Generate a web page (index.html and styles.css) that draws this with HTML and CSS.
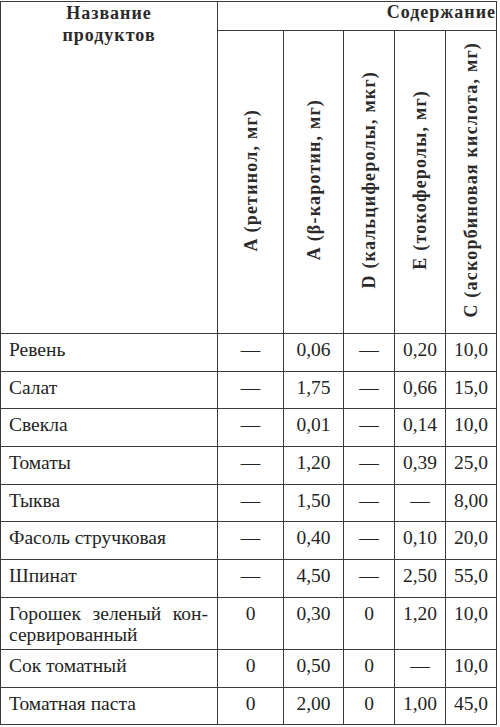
FILE: index.html
```html
<!DOCTYPE html>
<html lang="ru">
<head>
<meta charset="utf-8">
<title>Витамины</title>
<link rel="stylesheet" href="styles.css">
</head>
<body>
<table class="tbl">
  <colgroup>
    <col class="c-name">
    <col class="c1">
    <col class="c2">
    <col class="c3">
    <col class="c4">
    <col class="c5">
  </colgroup>
  <thead>
    <tr class="h1">
      <th class="hname" rowspan="2">Название<br>продуктов</th>
      <th class="hcont" colspan="5">Содержание</th>
    </tr>
    <tr class="h2">
      <th class="hv"><span class="vt">A (ретинол, мг)</span></th>
      <th class="hv"><span class="vt">A (β-каротин, мг)</span></th>
      <th class="hv"><span class="vt">D (кальциферолы, мкг)</span></th>
      <th class="hv"><span class="vt">E (токоферолы, мг)</span></th>
      <th class="hv"><span class="vt">C (аскорбиновая кислота, мг)</span></th>
    </tr>
  </thead>
  <tbody>
    <tr><td class="n">Ревень</td><td>—</td><td>0,06</td><td>—</td><td>0,20</td><td>10,0</td></tr>
    <tr><td class="n">Салат</td><td>—</td><td>1,75</td><td>—</td><td>0,66</td><td>15,0</td></tr>
    <tr><td class="n">Свекла</td><td>—</td><td>0,01</td><td>—</td><td>0,14</td><td>10,0</td></tr>
    <tr><td class="n">Томаты</td><td>—</td><td>1,20</td><td>—</td><td>0,39</td><td>25,0</td></tr>
    <tr><td class="n">Тыква</td><td>—</td><td>1,50</td><td>—</td><td>—</td><td>8,00</td></tr>
    <tr><td class="n">Фасоль стручковая</td><td>—</td><td>0,40</td><td>—</td><td>0,10</td><td>20,0</td></tr>
    <tr><td class="n">Шпинат</td><td>—</td><td>4,50</td><td>—</td><td>2,50</td><td>55,0</td></tr>
    <tr class="tall"><td class="n"><span class="jl">Горошек зеленый кон-</span><span class="nl">сервированный</span></td><td>0</td><td>0,30</td><td>0</td><td>1,20</td><td>10,0</td></tr>
    <tr><td class="n">Сок томатный</td><td>0</td><td>0,50</td><td>0</td><td>—</td><td>10,0</td></tr>
    <tr><td class="n">Томатная паста</td><td>0</td><td>2,00</td><td>0</td><td>1,00</td><td>45,0</td></tr>
  </tbody>
</table>
</body>
</html>
```
FILE: styles.css
```css
html, body {
  margin: 0;
  padding: 0;
  background: #ffffff;
}
body {
  padding-top: 1px;
  font-family: "Liberation Serif", "DejaVu Serif", serif;
  color: #242424;
}
.tbl {
  border-collapse: collapse;
  table-layout: fixed;
  width: 497px;
}
.c-name { width: 217px; }
.c1 { width: 66px; }
.c2 { width: 60px; }
.c3 { width: 51px; }
.c4 { width: 51px; }
.c5 { width: 51px; }
.tbl th,
.tbl td {
  border: 1px solid #3a3a3a;
  padding: 0;
}
.tbl th {
  font-weight: bold;
  color: #2a2a2a;
}
.h1 th { height: 28px; }
.hname {
  vertical-align: top;
  text-align: center;
  font-size: 18px;
  line-height: 22px;
  letter-spacing: 1px;
  padding-top: 4px;
}
.hcont {
  text-align: right;
  vertical-align: top;
  font-size: 18px;
  line-height: 21px;
  letter-spacing: 1px;
  padding: 4px 4px 0 0;
}
.h2 th { height: 302px; }
.hv {
  text-align: center;
  vertical-align: middle;
}
.vt {
  display: inline-block;
  writing-mode: vertical-rl;
  transform: rotate(180deg);
  white-space: nowrap;
  font-size: 18px;
  line-height: 20px;
  letter-spacing: 1.2px;
}
.tbl td {
  height: 31.7px;
  vertical-align: top;
  text-align: center;
  font-size: 19.5px;
  line-height: 21px;
  padding-top: 5px;
}
.tbl td.n {
  text-align: left;
  padding-left: 8px;
  padding-right: 9px;
}
.tall td { height: 46px; }
.jl {
  display: block;
  text-align: justify;
  text-align-last: justify;
}
.nl { display: block; }
```
